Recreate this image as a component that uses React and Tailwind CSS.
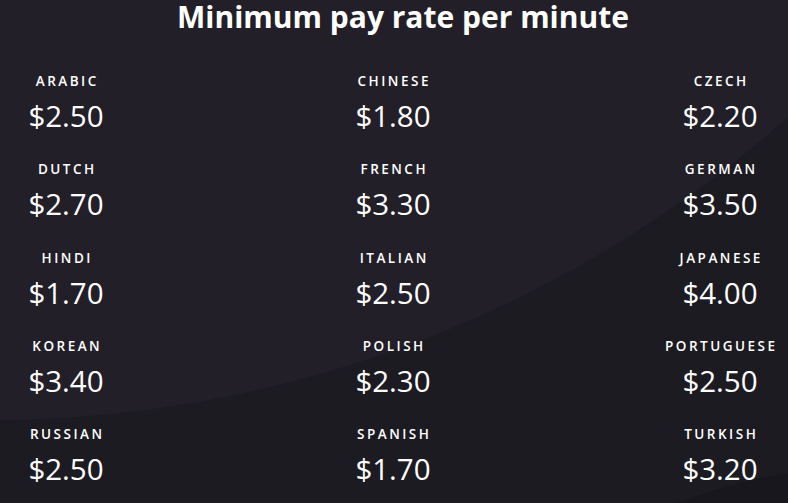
import React from 'react';

const RATES = [
  ['Arabic', '2.50'], ['Chinese', '1.80'], ['Czech', '2.20'],
  ['Dutch', '2.70'], ['French', '3.30'], ['German', '3.50'],
  ['Hindi', '1.70'], ['Italian', '2.50'], ['Japanese', '4.00'],
  ['Korean', '3.40'], ['Polish', '2.30'], ['Portuguese', '2.50'],
  ['Russian', '2.50'], ['Spanish', '1.70'], ['Turkish', '3.20'],
];

export default function App() {
  return (
    <div className="relative w-[788px] h-[503px] overflow-hidden bg-[#1d1b22] text-white" style={{ fontFamily: '"Open Sans", sans-serif' }}>
      {/* background curves */}
      <svg className="absolute inset-0" width="788" height="503" viewBox="0 0 788 503">
        <circle cx="-9" cy="-780" r="1200" fill="#221f28" />
        <path d="M677 503 Q740 480 788 473 L788 503 Z" fill="#19171e" />
      </svg>

      <div className="relative">
        <h1 className="text-center text-[30px] font-bold leading-[33px] ml-[18px]">Minimum pay rate per minute</h1>

        <div className="grid grid-cols-[120px_120px_120px] justify-between pl-[6px] pr-[8px] pt-[39px]">
          {RATES.map(([lang, rate]) => (
            <div key={lang} className="flex flex-col items-center h-[88.3px]">
              <div className="text-[13.5px] font-semibold uppercase tracking-[2.5px] leading-[18px] pl-[2.5px]">{lang}</div>
              <div className="text-[29.5px] leading-[36px] mt-[8px]">${rate}</div>
            </div>
          ))}
        </div>
      </div>
    </div>
  );
}
